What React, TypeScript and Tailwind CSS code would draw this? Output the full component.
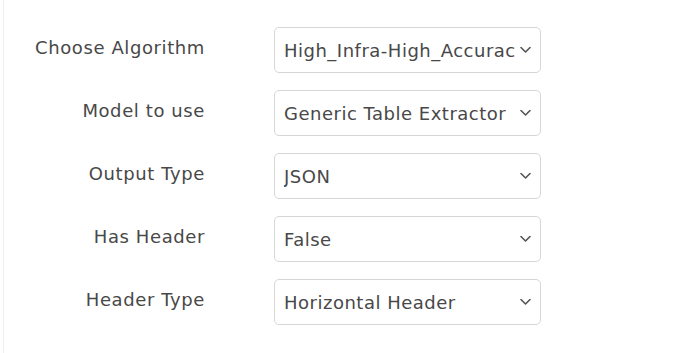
import React from "react";

const rows = [
  { label: "Choose Algorithm", value: "High_Infra-High_Accuracy" },
  { label: "Model to use", value: "Generic Table Extractor" },
  { label: "Output Type", value: "JSON" },
  { label: "Has Header", value: "False" },
  { label: "Header Type", value: "Horizontal Header" },
];

const Chevron = () => (
  <svg
    className="absolute right-[9px] top-1/2 -translate-y-1/2"
    width="11"
    height="7"
    viewBox="0 0 11 7"
    fill="none"
  >
    <path d="M1 1l4.5 4.5L10 1" stroke="#555" strokeWidth="1.6" strokeLinecap="round" strokeLinejoin="round" />
  </svg>
);

const App = () => {
  return (
    <div className="h-[353px] w-[681px] bg-white" style={{ fontFamily: '"DejaVu Sans", sans-serif' }}>
      <div className="ml-[3px] h-full border-l border-[#efefef] pt-[27px]">
        <div className="flex flex-col gap-[17px]">
          {rows.map((r) => (
            <div key={r.label} className="flex items-center">
              <div className="w-[201px] -mt-[6px] text-right text-[18px] tracking-[0.6px] text-[#484848]">{r.label}</div>
              <div className="relative ml-[69px] h-[46px] w-[267px] rounded-[5px] border border-[#d6d6d6] bg-white">
                <div className="flex h-full items-center overflow-hidden whitespace-nowrap pl-[9px] pr-[24px] text-[18px] tracking-[0.5px] text-[#484848]">
                  <span className="overflow-hidden">{r.value}</span>
                </div>
                <Chevron />
              </div>
            </div>
          ))}
        </div>
      </div>
    </div>
  );
};

export default App;
